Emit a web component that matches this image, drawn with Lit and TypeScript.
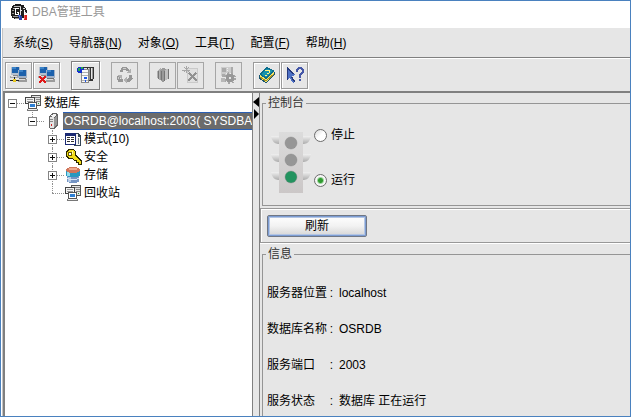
import { LitElement, html, css, svg, nothing } from "lit";
import { customElement, property, state } from "lit/decorators.js";

/* ---------- icons ---------- */

const server = svg`
  <path d="M6 0h10v11H6z" fill="#555"/>
  <path d="M7 1h8v9H7z" fill="#e4e4e4"/>
  <path d="M7 2h8v1H7zM11 4h4v1h-4zM11 6h4v1h-4z" fill="#888"/>
  <path d="M13 8h1v1h-1z" fill="#2a9a40"/>
  <path d="M0 2h10v7H0z" fill="#444"/><path d="M1 3h8v5H1z" fill="#f4f4f4"/>
  <path d="M2 4h6v1H2zM2 6h6v1H2z" fill="#9a9a9a"/>
  <path d="M3 7h9v7H3z" fill="#555"/><path d="M4 8h7v5H4z" fill="#fff"/>
  <path d="M5 9h5v3H5z" fill="#2d7fd4"/><path d="M2 14h11v2H2z" fill="#777"/><path d="M3 14h9v1H3z" fill="#eee"/>`;

const monitors = svg`
  <path d="M1 1h9v8H1z" fill="#b4bfce"/><path d="M2 1h7v6H2z" fill="#1c61ac"/><path d="M2 1h4v2H2z" fill="#3d84c8"/>
  <path d="M3 9h5v1H3z" fill="#8b8b8b"/><path d="M0 10h9v2H0z" fill="#a8a8a8"/><path d="M1 10h6v1H1z" fill="#ddd"/>
  <path d="M8 4h9v8H8z" fill="#9fb0c6"/><path d="M9 4h7v6H9z" fill="#1c61ac"/><path d="M9 4h4v2H9z" fill="#3d84c8"/>
  <path d="M9 12h7v1H9z" fill="#707070"/><path d="M8 13h9v3H8z" fill="#9c9c9c"/><path d="M8 13h7v1H8z" fill="#ddd"/>`;

const icons: Record<string, unknown> = {
  app: svg`
    <path d="M2 1h2V0h6v1h3v13h-2v1H3v-1H1v-2H0V4h1V2h1z" fill="#1c1c1c"/>
    <path d="M3 2h7v1H3zM2 4h2v1H2z" fill="#b8b8b8"/>
    <path d="M1 6h2v1H1zM1 9h2v1H1zM2 12h5v1H2zM4 14h4v1H4z" fill="#999"/>
    <path d="M8 4H4v7h4V8H6v1h1v1H5V5h3z" fill="#fff"/>
    <path d="M9 3h1v3h2v1h-2v4H9z" fill="#e4e4e4"/>
    <path d="M11 3h3v1h1v2h1v3h-2V6h-1v4h-2z" fill="#222"/>
    <path d="M12 4h2v1h-2zM14 8h1v2h-1z" fill="#ddd"/>
    <path d="M7 11h3v1h1v4H8v-3H7z" fill="#2440a8"/><path d="M8 11h1v3H8z" fill="#5878d8"/>
    <path d="M13 11h3v5h-3z" fill="#d82020"/><path d="M13 11h1v4h-1z" fill="#f06a60"/>`,
  connect: svg`${monitors}<path d="M4 11h1v3H4zM0 14h9v1H0z" fill="#222"/><path d="M3 13h3v3H3z" fill="#e8c820"/>`,
  disconnect: svg`${monitors}<path d="M1 10h2v1h1v1h1v-1h1v-1h2v2H7v1H6v1h1v1h1v2H6v-1H5v-1H4v1H3v1H1v-2h1v-1h1v-1H2v-1H1z" fill="#e01818"/>`,
  servers: svg`
    <path d="M6 1h11v12h-1v2H6z" fill="#333"/>
    <path d="M7 2h3v12H7zM11 2h2v12h-2zM14 2h2v11h-2z" fill="#e6e6e6"/><path d="M12 2h1v12h-1zM15 2h1v11h-1z" fill="#999"/>
    <path d="M4 3h8v14H4z" fill="#8a8a8a"/><path d="M5 4h6v12H5z" fill="#fafafa"/>
    <path d="M5 6h6v1H5zM5 9h6v1H5zM5 14h6v1H5z" fill="#b0b0b0"/>
    <path d="M7 11h3v2H7zM8 14h1v2H8z" fill="#2058e8"/>
    <path d="M1 1h5v1h1v2H5v3H1V6H0V2h1z" fill="#1430d0"/><path d="M1 2h2v3H1zM4 1h2v2H4z" fill="#20a850"/>`,
  recycle: svg`
    <g fill="none" stroke="#969696" stroke-width="3"><path d="M5 6l2-4h3l2 3"/><path d="M14 9l1 3-2 2h-3"/><path d="M7 14H3l-1-2 2-3"/></g>
    <path d="M10 7h5V3zM11 11v6l-4-3zM1 9h5v4z" fill="#b0b0b0"/><path d="M7 2h3v1H7zM2 11h1v2H2z" fill="#ccc"/>`,
  books: svg`
    <path d="M3 5l3-3 2 1v12l-5-3z" fill="#b0b0b0"/><path d="M6 4l3-2 3 1v11l-3 2-3-2z" fill="#9a9a9a"/>
    <path d="M11 4l2-1 1 1v9l-3 1z" fill="#c0c0c0"/><path d="M4 5v8M7 5v9M10 5v10M14 3v10" stroke="#757575"/>`,
  clear: svg`
    <path d="M5 2h10v14H5z" fill="#e0e0e0"/><path d="M5 2h10v14H5z" fill="none" stroke="#cacaca"/>
    <path d="M7 7l8 8M14 7l-8 8" stroke="#929292" stroke-width="2"/>
    <path d="M4 0v7M0 4h8M2 1l5 5M7 1L2 6" stroke="#a6a6a6"/>`,
  settings: svg`
    <path d="M1 1h12v9H1z" fill="#ccc"/><path d="M2 2h4v4H2zM2 8h3v3H2zM11 1h2v6h-2z" fill="#aaa"/>
    <path d="M7 2v4M6 7h5" stroke="#eee" stroke-dasharray="1 1"/>
    <circle cx="10" cy="12" r="3" fill="none" stroke="#989898" stroke-width="3"/>
    <circle cx="10" cy="12" r="5" fill="none" stroke="#a6a6a6" stroke-width="2" stroke-dasharray="2 2"/>
    <path d="M1 12h4v4H1z" fill="#b8b8b8"/>`,
  book: svg`
    <path d="M1 9v4l7 4 9-8V6z" fill="#155470"/>
    <path d="M2 9v3l6 4 8-7V6z" fill="#f6e468"/><path d="M2 11l6 4 8-7" stroke="#a89020" fill="none"/>
    <path d="M1 8l8-7 8 4-9 8z" fill="#0b6d8c"/><path d="M3 8l6-5 6 2-7 6z" fill="#1793ac"/>
    <path d="M7 5l2-1 3 1-1 2-2 1" stroke="#fff380" fill="none"/><path d="M7 9h2v1H7z" fill="#fff380"/>`,
  help: svg`
    <path d="M1 1l8 8-3 1 3 5-2 2-3-5-3 2z" fill="#4d70c4"/><path d="M1 1v13l1-1V4l5 4h2zM5 11l3 5 1-1-3-5z" fill="#25397c"/>
    <path d="M11 6V4l2-2h2l2 2v2l-3 3v3" stroke="#4658a8" stroke-width="2" fill="none"/><path d="M13 13h2v2h-2z" fill="#4658a8"/>`,
  database: server,
  trash: server,
  host: svg`
    <path d="M4 3l4-3h4l1 2v11l-4 3H5l-1-2z" fill="#666"/><path d="M5 3l4-2 3 1-3 2z" fill="#f4f4f4"/>
    <path d="M5 4h4v11H5z" fill="#e4e4e4"/><path d="M9 5l3-2v9l-3 2z" fill="#979797"/>
    <path d="M5 6h3v1H5zM5 8h3v1H5z" fill="#888"/><path d="M6 11h1v2H6z" fill="#d02020"/>`,
  schema: svg`
    <path d="M9 2h4l3 3v10H9z" fill="#345"/><path d="M10 3h3v3h2v8h-5z" fill="#f4f4f4"/><path d="M13 7h1v6h-1z" fill="#678"/>
    <path d="M0 2h11v12H0z" fill="#1b2a74"/>
    <path d="M1 5h9v8H1z" fill="#fff"/>
    <path d="M2 6h3v1H2zM2 8h3v1H2zM2 10h3v1H2zM6 6h3v1H6zM6 8h3v1H6zM6 10h3v1H6z" fill="#333"/>`,
  key: svg`
    <path d="M3 0h5l3 3v3l6 6v4h-4v-2h-2v-2H9l-2-2H4L1 8V3z" fill="#2c2800"/>
    <path d="M4 1h4l2 2v4l6 6v2h-2v-2h-2v-2h-2L7 9H4L2 7V3z" fill="#f2dc18"/>
    <path d="M3 3h3v3H3z" fill="#fff"/><path d="M3 3h3v3H3z" fill="none" stroke="#695b00"/><path d="M7 2h1v3H7z" fill="#fff69c"/>`,
  storage: svg`
    <path d="M2 8v6c0 3 12 3 12 0V8z" fill="#7494c4"/><path d="M3 9h3v6H3z" fill="#b4cae6"/>
    <path d="M1 2v6c0 3 14 3 14 0V2z" fill="#2898c0"/><path d="M2 3h3v6H2z" fill="#92dcee"/>
    <ellipse cx="8" cy="3" rx="7" ry="3" fill="#d0765c"/><ellipse cx="8" cy="2" rx="4" ry="1" fill="#eda98e"/>
    <path d="M2 11c2 2 10 2 12 0" stroke="#d7e4f4" fill="none"/>`,
};

const icon = (name: string, size = 18) => html`<svg
  class="icon" width=${size} height=${size} viewBox="0 0 ${size} ${size}"
  shape-rendering="crispEdges" aria-hidden="true">${icons[name]}</svg>`;

const base = css`
  * { box-sizing: border-box; }
  button {
    font: inherit; color: inherit; background: none; border: 0; padding: 0; margin: 0;
  }
  .icon { display: block; flex: none; }
`;

/* ---------- toolbar ---------- */

interface Tool { icon: string; label: string; disabled?: boolean; active?: boolean }

const toolGroups: Tool[][] = [
  [{ icon: "connect", label: "连接" }, { icon: "disconnect", label: "断开" }],
  [{ icon: "servers", label: "服务器", active: true }],
  [{ icon: "recycle", label: "回收", disabled: true }],
  [{ icon: "books", label: "归档", disabled: true }, { icon: "clear", label: "清除", disabled: true }],
  [{ icon: "settings", label: "设置", disabled: true }],
  [{ icon: "book", label: "手册" }, { icon: "help", label: "帮助" }],
];

@customElement("tool-bar")
class ToolBar extends LitElement {
  static styles = [base, css`
    :host { display: flex; align-items: center; gap: 10px; height: 32px; padding: 0 2px; }
    .group { display: flex; }
    .tool {
      width: 27px; height: 27px; margin-right: 1px;
      display: flex; align-items: center; justify-content: center;
      border: 1px solid #9a9a9a;
      box-shadow: inset 1px 1px 0 #fff, 1px 1px 0 #fff;
    }
    .tool:disabled { box-shadow: none; border-color: #a6a6a6; }
    .active { width: 29px; height: 29px; border-color: #808080; }
  `];

  render() {
    return toolGroups.map((group) => html`<div class="group">
      ${group.map((t) => html`<button class="tool ${t.active ? "active" : ""}"
        aria-label=${t.label} ?disabled=${t.disabled}>${icon(t.icon)}</button>`)}
    </div>`);
  }
}

/* ---------- object tree ---------- */

interface Node { icon: string; label: string; selected?: boolean; leaf?: boolean; open?: boolean; children?: Node[] }

const tree: Node[] = [{
  icon: "database", label: "数据库", open: true, children: [{
    icon: "host", label: "OSRDB@localhost:2003( SYSDBA", selected: true, open: true, children: [
      { icon: "schema", label: "模式(10)" },
      { icon: "key", label: "安全" },
      { icon: "storage", label: "存储" },
      { icon: "trash", label: "回收站", leaf: true },
    ],
  }],
}];

@customElement("object-tree")
class ObjectTree extends LitElement {
  static styles = [base, css`
    :host { display: block; background: #fff; overflow: hidden; padding: 1px 0 0 3px; }
    ul { list-style: none; margin: 0; padding: 0; }
    ul ul { padding-left: 20px; }
    li { position: relative; }
    ul ul > li::before {
      content: ""; position: absolute; left: 4px; top: 0; bottom: 0;
      border-left: 1px dotted #909090;
    }
    ul ul > li:last-child::before { bottom: auto; height: 9px; }
    .row { display: flex; align-items: center; height: 18px; white-space: nowrap; }
    .toggle {
      position: relative; flex: none; width: 9px; height: 9px; line-height: 0;
      background: #fff; border: 1px solid #848484;
    }
    .toggle svg { display: block; }
    .line { flex: none; width: 7px; margin-right: 1px; border-top: 1px dotted #909090; }
    .leaf { width: 12px; margin-left: 4px; }
    .label { margin-left: 1px; padding: 0 1px; line-height: 18px; }
    .selected {
      flex: 1; background: #6b6b6b; color: #fff; line-height: 16px;
      border: 1px solid #2a5fb4; border-width: 1px 0;
    }
  `];

  private node(n: Node): unknown {
    return html`<li role="treeitem" aria-selected=${n.selected ? "true" : "false"}>
      <div class="row">
        ${n.leaf ? html`<span class="line leaf"></span>` : html`
          <button class="toggle" aria-label=${n.label}>
            <svg width="7" height="7" shape-rendering="crispEdges"><path fill="#111"
              d=${n.open ? "M1 3h5v1H1z" : "M1 3h5v1H1zM3 1h1v5H3z"}/></svg>
          </button><span class="line"></span>`}
        ${icon(n.icon, 17)}
        <span class="label ${n.selected ? "selected" : ""}">${n.label}</span>
      </div>
      ${n.children ? html`<ul role="group">${n.children.map((c) => this.node(c))}</ul>` : nothing}
    </li>`;
  }

  render() {
    return html`<ul role="tree">${tree.map((n) => this.node(n))}</ul>`;
  }
}

/* ---------- traffic light ---------- */

@customElement("traffic-light")
class TrafficLight extends LitElement {
  @property({ type: Boolean }) running = false;

  static styles = css`:host { display: block; } svg { display: block; }`;

  render() {
    const lamps = [this.running ? "#969696" : "#c83c32", "#969696", this.running ? "#23935f" : "#969696"];
    return html`<svg width="40" height="62" viewBox="0 0 40 62" aria-hidden="true">
      <defs>
        <linearGradient id="body" x2="0" y2="1"><stop stop-color="#dcdcdc"/><stop offset="1" stop-color="#cbc7c7"/></linearGradient>
        <linearGradient id="wing" x2="0" y2="1"><stop stop-color="#f0f0f0"/><stop offset="1" stop-color="#adadad"/></linearGradient>
      </defs>
      ${[5, 23, 41].map((y) => svg`
        <path fill="url(#wing)" d="M0 ${y}h8v8H7q-6-1-7-8z"/>
        <path fill="url(#wing)" d="M40 ${y}h-8v8h1q6-1 7-8z"/>`)}
      <path fill="url(#body)" d="M8 1h24v61H8z"/>
      ${lamps.map((c, i) => svg`<circle cx="20" cy=${12 + i * 17} r="6" fill=${c} stroke="#858585" stroke-opacity=".4"/>`)}
    </svg>`;
  }
}

/* ---------- application ---------- */

const menus = [["系统", "S"], ["导航器", "N"], ["对象", "O"], ["工具", "T"], ["配置", "F"], ["帮助", "H"]];

const info = [
  ["服务器位置", "localhost"],
  ["数据库名称", "OSRDB"],
  ["服务端口", "2003"],
  ["服务状态", "数据库 正在运行"],
];

@customElement("app-root")
class AppRoot extends LitElement {
  @state() private running = true;

  static styles = [base, css`
    :host {
      display: block; height: 100vh; padding-bottom: 1px; background: #fff; color: #000;
      box-sizing: border-box; overflow: hidden;
      font: 12px/18px "Liberation Sans", "Noto Sans CJK SC", sans-serif;
    }
    .window {
      display: flex; flex-direction: column; height: 100%;
      border: 1px solid #4a81bf; overflow: hidden;
    }
    .title {
      display: flex; align-items: center; gap: 5px; flex: none;
      height: 27px; padding: 0 0 5px 10px; color: #999;
    }
    .title h1 { margin: 0; font-size: 12px; font-weight: 400; }
    .frame {
      flex: 1; min-height: 0; display: flex; flex-direction: column;
      margin-left: 1px; border-left: 1px solid #c4c4c4; background: #e6e6e6;
    }
    .menu {
      display: flex; align-items: center; gap: 16px; flex: none;
      height: 30px; padding: 0 10px; border-bottom: 1px solid #808080;
    }
    .menu button { white-space: nowrap; }
    .menu u { text-underline-offset: 1px; }
    .tools { flex: none; border-top: 1px solid #fff; border-bottom: 2px solid #808080; height: 35px; }
    .main { flex: 1; min-height: 0; display: flex; }
    .nav { flex: 0 0 250px; border: solid #808080; border-width: 0 1px 0 2px; }
    .split { flex: none; width: 7px; border-right: 1px solid #808080; padding-top: 3px; }
    .split button { display: block; height: 12px; }
    .split svg { display: block; }
    .content { flex: 1; min-width: 0; overflow: hidden; padding-top: 1px; }
    fieldset {
      margin: 0 0 0 2px; padding: 0 3px; min-width: 0;
      border: 1px solid #959595; border-right: 0;
    }
    legend { padding: 0 2px; color: #333; }
    .control { height: 112px; }
    .state { display: flex; align-items: flex-start; gap: 3px; padding: 14px 5px 0; }
    .light { padding-top: 5px; }
    .radios { display: flex; flex-direction: column; gap: 27px; }
    .radios label { display: flex; align-items: center; gap: 4px; }
    .radios input {
      appearance: none; width: 13px; height: 13px; margin: 0; border-radius: 50%;
      border: 1px solid #6c6c6c; background: linear-gradient(135deg, #d8d8d8, #fff 50%);
    }
    .radios input:checked {
      background: radial-gradient(circle, #2f9a2f 0 2px, #9fd49f 3px, #f6f6f6 4px);
    }
    .actions {
      margin: 2px 0; padding: 6px 6px 5px; border: 1px solid #989898; border-right: 0;
      box-shadow: inset 1px 1px 0 #fff, 0 1px 0 #fff;
    }
    .refresh {
      display: block; width: 100px; height: 22px; line-height: 16px; border-radius: 2px;
      border: 1px solid #707784;
      box-shadow: inset 0 0 0 1px #7c9cd2, inset 0 0 0 2px #b4c6e4;
      background: linear-gradient(#fff, #f2f2f2 50%, #d4d4d4);
    }
    .info { border-bottom: 0; height: 100%; }
    dl { margin: 0; padding-top: 12px; }
    dl div { display: flex; align-items: center; height: 36px; padding-left: 1px; }
    dt { display: flex; justify-content: space-between; width: 66px; }
    dd { margin: 0 0 0 6px; }
  `];

  private radio(label: string, value: boolean) {
    return html`<label><input type="radio" name="state" .checked=${this.running === value}
      @change=${() => (this.running = value)}>${label}</label>`;
  }

  render() {
    return html`<div class="window">
      <header class="title">${icon("app", 16)}<h1>DBA管理工具</h1></header>
      <div class="frame">
        <nav class="menu">${menus.map(([name, key]) => html`<button>${name}(<u>${key}</u>)</button>`)}</nav>
        <tool-bar class="tools"></tool-bar>
        <div class="main">
          <object-tree class="nav"></object-tree>
          <div class="split">
            <button aria-label="收起"><svg width="6" height="10"><path d="M6 0v10L0 5z"/></svg></button>
            <button aria-label="展开"><svg width="6" height="10"><path d="M1 0v10l5-5z"/></svg></button>
          </div>
          <main class="content">
            <fieldset class="control">
              <legend>控制台</legend>
              <div class="state">
                <traffic-light class="light" ?running=${this.running}></traffic-light>
                <div class="radios">${this.radio("停止", false)}${this.radio("运行", true)}</div>
              </div>
            </fieldset>
            <div class="actions"><button class="refresh">刷新</button></div>
            <fieldset class="info">
              <legend>信息</legend>
              <dl>${info.map(([k, v]) => html`<div><dt><span>${k}</span><span>:</span></dt><dd>${v}</dd></div>`)}</dl>
            </fieldset>
          </main>
        </div>
      </div>
    </div>`;
  }
}
